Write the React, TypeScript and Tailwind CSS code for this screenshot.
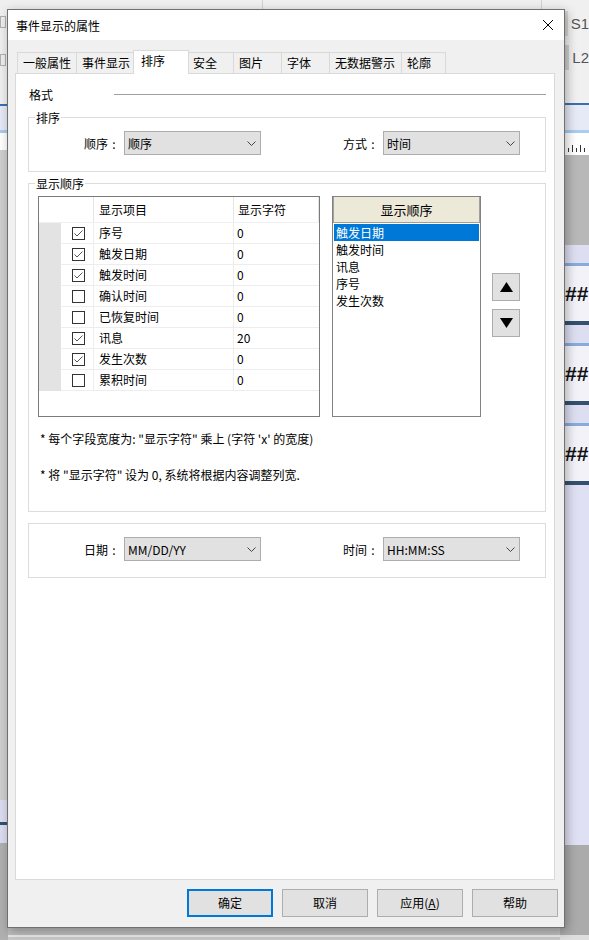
import React from 'react';

const tabs = [
  { label: '一般属性', w: 'w-[59px]' },
  { label: '事件显示', w: 'w-[59px]' },
  { label: '排序', w: 'w-[52px]', active: true },
  { label: '安全', w: 'w-[46px]' },
  { label: '图片', w: 'w-[48px]' },
  { label: '字体', w: 'w-[48px]' },
  { label: '无数据警示', w: 'w-[72px]' },
  { label: '轮廓', w: 'w-[45px]', last: true },
];

const fields = [
  { name: '序号', chars: '0', on: true },
  { name: '触发日期', chars: '0', on: true },
  { name: '触发时间', chars: '0', on: true },
  { name: '确认时间', chars: '0', on: false },
  { name: '已恢复时间', chars: '0', on: false },
  { name: '讯息', chars: '20', on: true },
  { name: '发生次数', chars: '0', on: true },
  { name: '累积时间', chars: '0', on: false },
];

const order = ['触发日期', '触发时间', '讯息', '序号', '发生次数'];

function Combo({ value }: { value: string }) {
  return (
    <div className="flex h-[24px] w-[137px] items-center justify-between border border-[#adadad] bg-[#e1e1e1] pl-[3px] pr-[4px]">
      <span className="leading-[17px]">{value}</span>
      <svg width="9" height="5" viewBox="0 0 9 5">
        <polyline points="0.5,0.5 4.5,4.5 8.5,0.5" fill="none" stroke="#444" strokeWidth="1" />
      </svg>
    </div>
  );
}

function Label({ text, className = '' }: { text: string; className?: string }) {
  return (
    <span className={`flex w-[40px] leading-[17px] ${className}`}>
      {text}
      <span className="inline-block w-[12px] text-center">:</span>
    </span>
  );
}

function Group({ label, className, children }: { label?: string; className: string; children: React.ReactNode }) {
  return (
    <div className={`relative border border-[#dcdcdc] ${className}`}>
      {label && (
        <span className="absolute -top-[9px] left-[6px] bg-white px-px leading-[17px]">{label}</span>
      )}
      {children}
    </div>
  );
}

function Check({ on }: { on: boolean }) {
  return (
    <div className="flex h-[13px] w-[13px] items-center justify-center border border-[#333333] bg-white">
      {on && (
        <svg width="11" height="11" viewBox="0 0 11 11">
          <polyline points="1.5,5.5 4,8 9.5,2.5" fill="none" stroke="#555" strokeWidth="1" />
        </svg>
      )}
    </div>
  );
}

function Btn({ children, primary }: { children: React.ReactNode; primary?: boolean }) {
  return (
    <div
      className={`flex h-[28px] w-[86px] items-center justify-center bg-[#e1e1e1] ${
        primary ? 'border-2 border-[#0078d7]' : 'border border-[#adadad]'
      }`}
    >
      {children}
    </div>
  );
}

function Hashes() {
  return (
    <>
      <div className="h-[18px] bg-[#dedef3]" />
      <div className="h-[3px] bg-[#86acd8]" />
      <div className="flex h-[55px] items-center bg-[#f2f2f8] pl-[5px] font-['Liberation_Sans',sans-serif] text-[21px] font-bold text-[#111]">
        ##
      </div>
      <div className="h-[4px] bg-[#34506f]" />
    </>
  );
}

export default function App() {
  return (
    <div className="relative flex h-[940px] w-[589px] overflow-hidden font-['Noto_Sans_CJK_SC','Microsoft_YaHei',sans-serif] text-[12px] text-black">
      {/* app behind, left edge */}
      <div className="flex w-[8px] flex-col">
        <div className="h-[104px] bg-[#efefef] pt-[16px]">
          <div className="h-[12px] w-[6px] border border-[#b0b0b0]" />
          <div className="mt-[26px] h-[12px] w-[6px] border border-[#b0b0b0]" />
        </div>
        <div className="h-[2px] bg-[#3c6db3]" />
        <div className="h-[24px] bg-[#e6eaf6]" />
        <div className="h-[3px] bg-[#a8cdee]" />
        <div className="h-[17px] bg-white" />
        <div className="h-[650px] bg-[#cfcfcf]" />
        <div className="h-[22px] bg-[#dcdcf0]" />
        <div className="h-[3px] bg-[#34506f]" />
        <div className="h-[18px] bg-[#dcdcf0]" />
        <div className="flex-1 bg-[#b0b0b0]" />
      </div>

      {/* app behind, middle */}
      <div className="flex flex-1 flex-col">
        <div className="flex h-[9px] bg-[#efefef]">
          <div className="w-[254px]" />
          <div className="w-px bg-[#d0d0d0]" />
          <div className="w-[278px]" />
          <div className="w-px bg-[#d0d0d0]" />
        </div>
        <div className="flex-1 bg-[#cccccc]" />
        <div className="h-[7px] bg-[#bdbdbd]" />
        <div className="h-[2px] bg-[#e8e8e8]" />
        <div className="h-[3px] bg-[#c8c8c8]" />
      </div>

      {/* app behind, right edge */}
      <div className="flex w-[29px] flex-col">
        <div className="h-[11px] bg-[#f0f0f0]" />
        <div className="flex h-[25px] bg-[#f0f0f0]">
          <div className="w-[13px] bg-[#d6d6d6]" />
          <span className="pl-[3px] font-['Liberation_Sans',sans-serif] text-[15px] leading-[25px] text-[#555]">S1</span>
        </div>
        <div className="h-[9px] bg-[#f0f0f0]" />
        <div className="flex h-[25px] bg-[#f0f0f0]">
          <div className="w-[13px] bg-[#cfcfcf]" />
          <span className="pl-[3px] font-['Liberation_Sans',sans-serif] text-[15px] leading-[25px] text-[#555]">L2</span>
        </div>
        <div className="h-[33px] bg-[#f0f0f0]" />
        <div className="h-[2px] bg-[#3c6db3]" />
        <div className="h-[25px] bg-[#e6eaf6]" />
        <div className="h-[3px] bg-[#a8cdee]" />
        <div className="flex h-[22px] items-end gap-[3px] bg-white pb-[3px] pl-[8px]">
          <div className="h-[4px] w-px bg-[#333]" />
          <div className="h-[7px] w-px bg-[#333]" />
          <div className="h-[4px] w-px bg-[#333]" />
          <div className="h-[7px] w-px bg-[#333]" />
          <div className="h-[4px] w-px bg-[#333]" />
        </div>
        <div className="h-[90px] bg-[#b8b8b8]" />
        <Hashes />
        <Hashes />
        <Hashes />
        <div className="h-[360px] bg-[#e0e0f4]" />
        <div className="h-[90px] bg-[#ababab]" />
        <div className="flex-1 bg-[#dedede]" />
      </div>

      {/* dialog window */}
      <div className="absolute left-[7px] top-[9px] flex h-[919px] w-[558px] flex-col border border-[#707070] bg-[#f0f0f0] shadow-[2px_3px_10px_rgba(0,0,0,0.3)]">
        <div className="flex h-[30px] items-center justify-between bg-white pl-[8px] pr-[11px]">
          <span className="leading-[17px]">事件显示的属性</span>
          <svg width="10" height="10" viewBox="0 0 10 10">
            <line x1="0" y1="0" x2="10" y2="10" stroke="#000" strokeWidth="1" />
            <line x1="10" y1="0" x2="0" y2="10" stroke="#000" strokeWidth="1" />
          </svg>
        </div>

        {/* tabs */}
        <div className="ml-[9px] mt-[10px] flex h-[23px] items-end">
          {tabs.map((t) =>
            t.active ? (
              <div
                key={t.label}
                className="relative z-10 -mx-[2px] -mb-px h-[24px] w-[56px] border border-b-0 border-[#d9d9d9] bg-white pl-[7px] leading-[19px]"
              >
                {t.label}
              </div>
            ) : (
              <div
                key={t.label}
                className={`h-[21px] ${t.w} border-l border-t border-[#d9d9d9] bg-[#f0f0f0] pl-[5px] leading-[19px] ${
                  t.last ? 'border-r' : ''
                }`}
              >
                {t.label}
              </div>
            )
          )}
        </div>

        {/* tab page */}
        <div className="ml-[7px] flex h-[807px] w-[540px] flex-col border border-[#d9d9d9] bg-white pl-[12px] pr-[8px] pt-[12px]">
          <div className="flex h-[17px] items-center">
            <span className="w-[86px] pl-px leading-[17px]">格式</span>
            <div className="h-px flex-1 bg-[#a0a0a0]" />
          </div>

          <Group label="排序" className="mt-[14px] h-[55px]">
            <div className="flex items-center pl-[55px] pt-[13px]">
              <Label text="顺序" />
              <Combo value="顺序" />
              <Label text="方式" className="ml-[82px]" />
              <Combo value="时间" />
            </div>
          </Group>

          <Group label="显示顺序" className="mt-[11px] h-[329px]">
            <div className="pl-[9px] pt-[12px]">
              <div className="flex">
                {/* field list */}
                <div className="flex h-[221px] w-[282px] flex-col border border-[#7a7a7a] bg-white">
                  <div className="flex h-[26px] border-b border-[#f0f0f0]">
                    <div className="w-[55px] border-r border-[#e5e5e5]" />
                    <div className="w-[140px] border-r border-[#e5e5e5] pl-[5px] leading-[25px]">显示项目</div>
                    <div className="w-[85px] border-r border-[#e5e5e5] pl-[4px] leading-[25px]">显示字符</div>
                  </div>
                  {fields.map((f) => (
                    <div key={f.name} className="flex h-[21px]">
                      <div className="w-[22px] bg-[#e3e3e3]" />
                      <div className="flex w-[33px] items-center border-b border-r border-[#ededed] pl-[11px]">
                        <Check on={f.on} />
                      </div>
                      <div className="w-[140px] border-b border-r border-[#ededed] pl-[5px] leading-[20px]">{f.name}</div>
                      <div className="w-[85px] border-b border-[#ededed] pl-[3px] leading-[20px]">{f.chars}</div>
                    </div>
                  ))}
                </div>

                {/* display order */}
                <div className="ml-[12px] flex h-[221px] w-[149px] flex-col border border-[#828282] bg-white">
                  <div className="flex h-[26px] items-center justify-center border border-t-0 border-[#a0a0a0] bg-[#ece9d8] text-[13px]">
                    显示顺序
                  </div>
                  <div className="mt-px">
                    {order.map((o, i) => (
                      <div
                        key={o}
                        className={`mx-px h-[17px] pl-[2px] leading-[17px] ${
                          i === 0 ? 'bg-[#0078d7] text-white' : ''
                        }`}
                      >
                        {o}
                      </div>
                    ))}
                  </div>
                </div>

                <div className="ml-[11px] flex flex-col gap-[8px] pt-[77px]">
                  <div className="flex h-[28px] w-[28px] items-center justify-center border border-[#adadad] bg-[#e1e1e1]">
                    <svg width="13" height="10" viewBox="0 0 13 10">
                      <polygon points="6.5,0 13,10 0,10" fill="#000" />
                    </svg>
                  </div>
                  <div className="flex h-[28px] w-[28px] items-center justify-center border border-[#adadad] bg-[#e1e1e1]">
                    <svg width="13" height="10" viewBox="0 0 13 10">
                      <polygon points="0,0 13,0 6.5,10" fill="#000" />
                    </svg>
                  </div>
                </div>
              </div>

              <p className="mt-[13px] pl-[2px] leading-[17px]">{'* 每个字段宽度为: "显示字符" 乘上 (字符 \'x\' 的宽度)'}</p>
              <p className="mt-[19px] pl-[2px] leading-[17px]">{'* 将 "显示字符" 设为 0, 系统将根据内容调整列宽.'}</p>
            </div>
          </Group>

          <Group className="mt-[11px] h-[55px]">
            <div className="flex items-center pl-[55px] pt-[13px]">
              <Label text="日期" />
              <Combo value="MM/DD/YY" />
              <Label text="时间" className="ml-[82px]" />
              <Combo value="HH:MM:SS" />
            </div>
          </Group>
        </div>

        {/* buttons */}
        <div className="mr-[6px] mt-[9px] flex justify-end gap-[9px]">
          <Btn primary>确定</Btn>
          <Btn>取消</Btn>
          <Btn>
            应用(<span className="underline">A</span>)
          </Btn>
          <Btn>帮助</Btn>
        </div>
      </div>
    </div>
  );
}
